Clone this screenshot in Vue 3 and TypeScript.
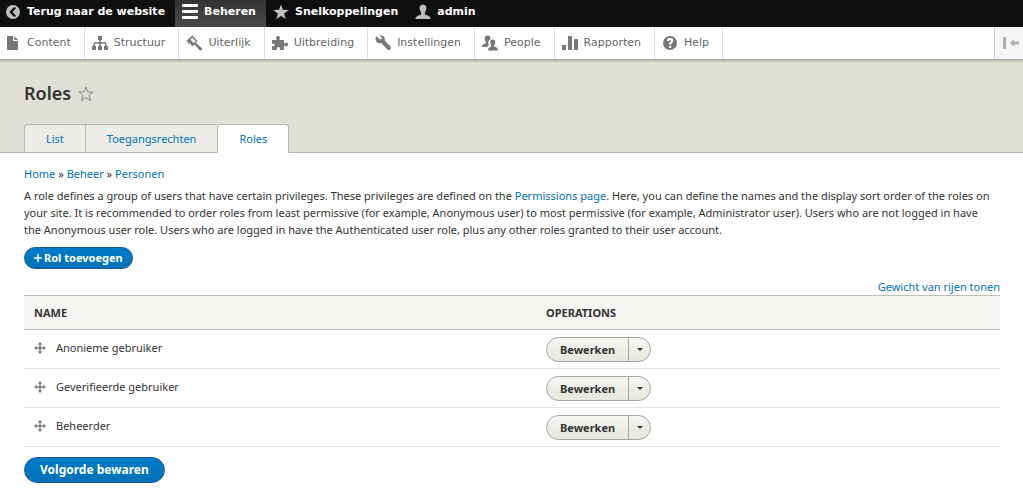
<script setup lang="ts">
interface Entry {
  label: string
  icon: string
}

const trayItems: Entry[] = [
  { label: 'Content', icon: 'M2 1h6v5h5v9H2z M9.500 1L13 5H9.500z' },
  { label: 'Structuur', icon: 'M6 1h4v4H8.800v2.200h4.400q1.300 0 1.300 1.300V11H16v4h-4v-4h1V8.700H8.800V11H10v4H6v-4h1.200V8.700H3V11h1v4H0v-4h1.500V8.500q0-1.300 1.300-1.300h4.400V5H6z' },
  { label: 'Uiterlijk', icon: 'M6.500 0.500L0 6l2.300 1L2 9l2.500-.5L6 11.500 8.500 9.600l5.200 5.700q1.200.5 1.900-.2.800-.8.200-1.900L10 8l1.500-1.700zM6.500 2.700l3.200 3.500-1.900 1.700-3.500-3.500z' },
  { label: 'Uitbreiding', icon: 'M0 5h4.600Q3.200 1 6 1T7.400 5H12v3.600q.8-.2 1.500-.9Q16 7 16 9.500T13.500 11.300q-.7-.7-1.500-.9V15H7.800q1-3-1.300-3T5 15H0v-4q2.500.8 2.500-1T0 8.800z' },
  { label: 'Instellingen', icon: 'M1.400 1.200L5 4.400l1.500-.3.200-1.600L4.300.3Q8.500-.3 9.700 3.300q.2 1-.1 2l5.800 6.300q1 1.400-.2 2.700-1.400 1.200-2.800.1L6.300 8.100Q1.500 9 .5 4.500q-.3-1.800.9-3.300z' },
  { label: 'People', icon: 'M3 1.500q2.500-2 5 0 1 1.500.2 3-1.900.8-2 3 0 1.500.8 2.700L5 12H0q0-2.600 2.700-3.200Q4.800 8 3.400 6 2.300 4 3 1.500z M8.500 5.500q2-2 4.300-.3 1.200 2-.3 4.600-1 1.600.3 2Q16 12.700 16 15.500H5.800q0-2.700 2.700-3.700 1.300-.5.500-2-1.400-2.500-.5-4.300z' },
  { label: 'Rapporten', icon: 'M0 10h4v5H0z M6 1h4v14H6z M12 4h4v11h-4z' },
  { label: 'Help', icon: 'M8 1a7 7 0 1 0 0 14A7 7 0 0 0 8 1zM7 10.800h2.200V13H7zM4.900 6Q5 3 8.100 3t3.200 2.800q0 1.500-1.400 2.400-.7.500-.7 1.400H7q0-1.700 1.200-2.500.8-.6.800-1.200 0-.9-.9-.9T7.100 6z' },
]

const tabs = [
  { label: 'List', active: false },
  { label: 'Toegangsrechten', active: false },
  { label: 'Roles', active: true },
]

const roles = ['Anonieme gebruiker', 'Geverifieerde gebruiker', 'Beheerder']
</script>

<template>
  <div class="page">
    <nav class="bar" aria-label="Toolbar">
      <a href="#" class="bar-item back">
        <svg viewBox="0 0 16 16"><path fill-rule="evenodd" d="M8 1a7 7 0 1 0 0 14A7 7 0 0 0 8 1zM8.500 3.500h3L7.500 8l4 4.500h-3L4.500 8z" /></svg>
        Terug naar de website
      </a>
      <a href="#" class="bar-item active">
        <svg viewBox="0 0 16 16"><path d="M1 0h14q1 0 1 1v1q0 1-1 1H1Q0 3 0 2V1q0-1 1-1zM1 6h14q1 0 1 1v1q0 1-1 1H1Q0 9 0 8V7q0-1 1-1zM1 12h14q1 0 1 1v1q0 1-1 1H1q-1 0-1-1v-1q0-1 1-1z" /></svg>
        Beheren
      </a>
      <a href="#" class="bar-item">
        <svg viewBox="0 0 16 16"><path d="M8 .5l1.900 5.200 5.900.2-4.700 3.600 1.700 5.600L8 11.900l-4.800 3.200 1.700-5.600L.2 5.900l5.900-.2z" /></svg>
        Snelkoppelingen
      </a>
      <a href="#" class="bar-item user">
        <svg viewBox="0 0 16 16"><path d="M5 2q3-3 6 0 1.200 2.500-.8 6-1.200 2.200.8 3 4.500.8 4.500 4H.5q0-3.200 4.500-4 2-.8.800-3Q3.800 4.500 5 2z" /></svg>
        admin
      </a>
    </nav>

    <nav class="tray" aria-label="Beheren">
      <a v-for="item in trayItems" :key="item.label" href="#" class="tray-item">
        <svg viewBox="0 0 16 16"><path fill-rule="evenodd" :d="item.icon" /></svg>
        {{ item.label }}
      </a>
      <button type="button" class="orient" aria-label="Vertical orientation">
        <svg viewBox="0 0 16 14"><path d="M0 1h3v12H0zM7 7l4-3.500V5.500h5v3h-5v2z" /></svg>
      </button>
    </nav>

    <header class="header">
      <h1>
        Roles
        <button type="button" class="star" aria-label="Add to shortcuts">
          <svg viewBox="0 0 16 16"><path d="M8 1l1.800 4.900 5.400.2-4.200 3.300 1.500 5.200L8 11.600l-4.500 3L5 9.400.8 6.100l5.400-.2z" /></svg>
        </button>
      </h1>
      <nav class="tabs" aria-label="Tabs">
        <a v-for="tab in tabs" :key="tab.label" href="#" class="tab" :class="{ active: tab.active }">{{ tab.label }}</a>
      </nav>
    </header>

    <main class="content">
      <nav class="crumbs" aria-label="Breadcrumb">
        <a href="#">Home</a> » <a href="#">Beheer</a> » <a href="#">Personen</a>
      </nav>
      <p class="description">
        A role defines a group of users that have certain privileges. These privileges are defined on the
        <a href="#">Permissions page</a>. Here, you can define the names and the display sort order of the roles on
        your site. It is recommended to order roles from least permissive (for example, Anonymous user) to most
        permissive (for example, Administrator user). Users who are not logged in have the Anonymous user role. Users
        who are logged in have the Authenticated user role, plus any other roles granted to their user account.
      </p>
      <button type="button" class="primary add">
        <svg viewBox="0 0 8 8"><path d="M3.300 0h1.400v3.300H8v1.400H4.700V8H3.300V4.700H0V3.300h3.300z" /></svg>
        Rol toevoegen
      </button>
      <div class="weights"><button type="button">Gewicht van rijen tonen</button></div>

      <table>
        <thead>
          <tr><th scope="col">NAME</th><th scope="col" class="ops">OPERATIONS</th></tr>
        </thead>
        <tbody>
          <tr v-for="role in roles" :key="role">
            <td>
              <div class="name">
                <svg viewBox="0 0 12 12"><path d="M6 0l2.200 2.500H6.700v2.800h2.800V3.800L12 6 9.500 8.200V6.700H6.700v2.800h1.500L6 12 3.800 9.500h1.500V6.700H2.500v1.500L0 6l2.500-2.200v1.500h2.800V2.500H3.800z" /></svg>
                {{ role }}
              </div>
            </td>
            <td>
              <div class="drop">
                <button type="button" class="edit">Bewerken</button>
                <button type="button" class="toggle" aria-label="List additional actions">
                  <svg viewBox="0 0 6 3"><path d="M0 0h6L3 3z" /></svg>
                </button>
              </div>
            </td>
          </tr>
        </tbody>
      </table>
      <button type="button" class="primary save">Volgorde bewaren</button>
    </main>
  </div>
</template>

<style>
body {
  margin: 0;
  background: #fff;
}
</style>

<style scoped>
* {
  box-sizing: border-box;
}

.page {
  font: 11px/16px "Noto Sans", "Open Sans", sans-serif;
  color: #333;
}

a {
  color: #0071b8;
  text-decoration: none;
}

button {
  font: inherit;
  margin: 0;
  padding: 0;
  border: 0;
  background: none;
  cursor: pointer;
}

svg {
  display: block;
  flex: none;
  fill: currentColor;
}

.bar {
  display: flex;
  height: 27px;
  background: #0f0f0f;
  font-family: "DejaVu Sans", sans-serif;
  font-weight: bold;
}

.bar-item {
  display: flex;
  align-items: center;
  gap: 6px;
  padding: 0 10px 4px 7px;
  color: #fff;
  white-space: nowrap;
}

.bar-item svg {
  width: 16px;
  height: 16px;
  color: #bebebe;
}

.bar-item.back {
  padding-left: 5px;
}

.bar-item.active {
  background: linear-gradient(#333, #4a4a4a);
}

.bar-item.active svg {
  color: #fff;
}

.tray {
  position: relative;
  z-index: 1;
  display: flex;
  height: 33px;
  background: #fff;
  border-bottom: 1px solid #aaa;
  box-shadow: 0 1px 2px rgba(0, 0, 0, 0.25);
  font-family: "DejaVu Sans", sans-serif;
}

.tray-item {
  display: flex;
  align-items: center;
  gap: 6px;
  padding: 0 13px 0 7px;
  border-right: 1px solid #ddd;
  color: #666;
  white-space: nowrap;
}

.tray-item:first-child {
  padding-left: 5px;
}

.tray-item svg {
  width: 16px;
  height: 16px;
  color: #787878;
}

.orient {
  width: 29px;
  margin-left: auto;
  padding-left: 8px;
  border-left: 1px solid #c8c8c8;
  background: #f5f5f5;
  color: #b0b0b0;
}

.orient svg {
  width: 16px;
  height: 14px;
}

.header {
  padding: 22px 24px 0;
  background: #e0e0d8;
  border-bottom: 1px solid #b8b8b2;
}

h1 {
  display: flex;
  align-items: center;
  gap: 7px;
  margin: 0 0 19px;
  font-size: 18px;
  line-height: 23px;
  font-weight: 600;
  color: #333;
}

.star {
  color: #888;
}

.star svg {
  width: 16px;
  height: 16px;
  fill: none;
  stroke: currentColor;
}

.tabs {
  display: flex;
  margin-bottom: -1px;
}

.tab {
  height: 29px;
  padding: 0 21px;
  border: 1px solid #b8b8b2;
  border-right: 0;
  background: #ecede8;
  line-height: 28px;
}

.tab:first-child {
  border-top-left-radius: 4px;
}

.tab.active {
  border-right: 1px solid #b8b8b2;
  border-bottom-color: #fff;
  border-radius: 4px 4px 0 0;
  background: #fff;
}

.content {
  padding: 13px 23px 8px 24px;
}

.description {
  margin: 5px 0 9px;
  padding-right: 6px;
  line-height: 17px;
}

.primary {
  display: flex;
  align-items: center;
  justify-content: center;
  border: 1px solid #1e5c90;
  border-radius: 20px;
  background: linear-gradient(#007bc6, #0071b8);
  color: #fff;
  font-weight: bold;
}

.add {
  gap: 2px;
  height: 22px;
  padding: 0 9px;
}

.add svg {
  width: 8px;
  height: 8px;
}

.weights {
  display: flex;
  justify-content: flex-end;
  padding-top: 10px;
}

.weights button {
  color: #0071b8;
}

table {
  width: 100%;
  border-collapse: collapse;
  table-layout: fixed;
}

th {
  height: 34px;
  padding: 0 10px;
  border-top: 1px solid #bfbfba;
  border-bottom: 1px solid #bfbfba;
  background: #f5f5f2;
  text-align: left;
}

.ops {
  width: 464px;
}

td {
  height: 39px;
  padding: 1px 10px 0;
  border-bottom: 1px solid #e6e4df;
}

.name {
  display: flex;
  align-items: center;
  gap: 10px;
  padding-bottom: 4px;
}

.name svg {
  width: 12px;
  height: 12px;
  color: #787878;
}

.drop {
  display: inline-flex;
  height: 25px;
  border: 1px solid #a6a6a6;
  border-radius: 13px;
  background: linear-gradient(#f6f6f3, #e7e7df);
  vertical-align: middle;
}

.edit {
  padding: 0 13px;
  color: #333;
  font-weight: bold;
}

.toggle {
  display: flex;
  align-items: center;
  justify-content: center;
  width: 22px;
  border-left: 1px solid #a6a6a6;
  color: #333;
}

.toggle svg {
  width: 6px;
  height: 3px;
}

.save {
  height: 26px;
  margin-top: 10px;
  padding: 0 15px;
  font-size: 12px;
}
</style>
